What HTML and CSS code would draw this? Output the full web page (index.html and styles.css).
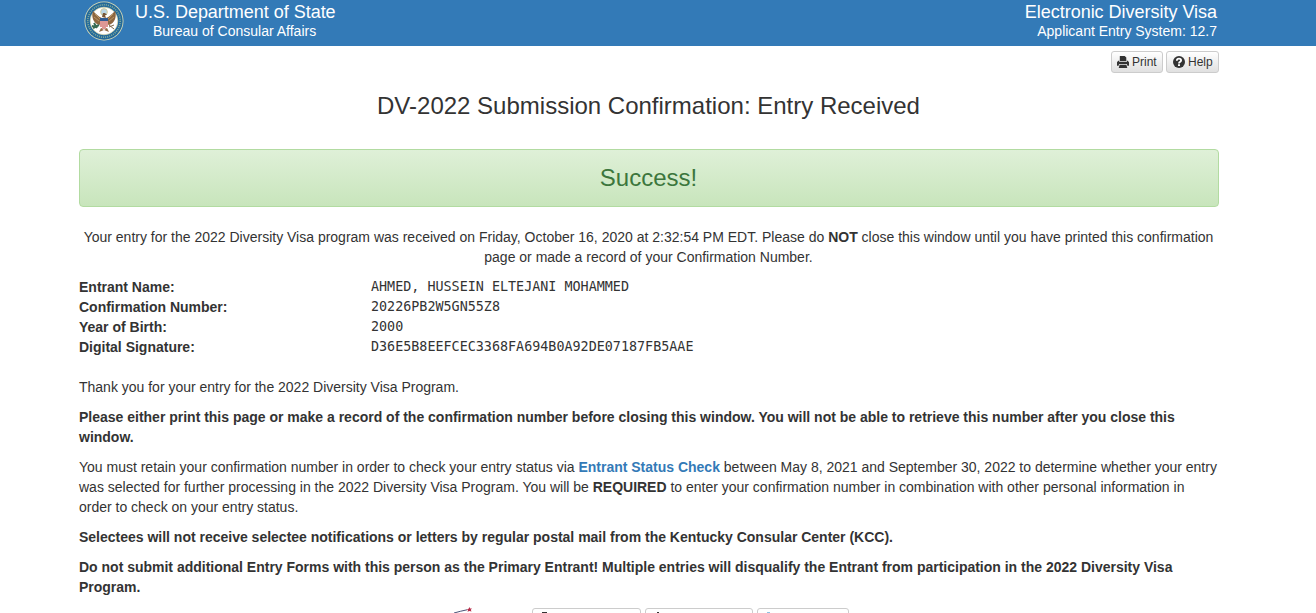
FILE: index.html
```html
<!DOCTYPE html>
<html lang="en">
<head>
<meta charset="utf-8">
<title>Electronic Diversity Visa</title>
<link rel="stylesheet" href="styles.css">
</head>
<body>
<header class="banner">
  <div class="container banner-row">
    <svg class="seal" viewBox="0 0 40 40">
      <circle cx="20" cy="20" r="19.5" fill="#dfe0b8"/>
      <circle cx="20" cy="20" r="18.7" fill="#23699a"/>
      <circle cx="20" cy="20" r="16.2" fill="none" stroke="#7fa99a" stroke-width="1.6" stroke-dasharray="1.1 1"/>
      <circle cx="20" cy="20" r="13.8" fill="#fff" stroke="#d9d5a2" stroke-width=".7"/>
      <circle cx="20" cy="11" r="3.4" fill="#b9d5e5" stroke="#d8c888" stroke-width=".8"/>
      <path d="M18 17C15 16 12 13 9 10C7 15 9 22 15 24L17 23ZM22 17C25 16 28 13 31 10C33 15 31 22 25 24L23 23Z" fill="#8e6740"/>
      <path d="M11 13L16 18M10 16L15 20M29 13L24 18M30 16L25 20" stroke="#c2a16b" stroke-width=".8"/>
      <path d="M18 16L19 12L21 12L23 14L21 14L22 17Z" fill="#785637"/>
      <path d="M17 27L15 31L20 29L25 31L23 27Z" fill="#916b46"/>
      <path d="M15 24L9 27M10 22L13 27M8 25L13 26" stroke="#386b54" stroke-width="2"/>
      <path d="M25 24L30 28M25 26L30 24" stroke="#806849" stroke-width="1"/>
      <path d="M16 17H24V23Q24 27 20 29Q16 27 16 23Z" fill="#fff"/>
      <path d="M17 20V26M19 20V28M21 20V28M23 20V26" stroke="#c1433e" stroke-width="1.1"/>
      <path d="M16 17H24V20H16Z" fill="#315b91"/>
    </svg>
    <div class="agency">
      <div class="big">U.S. Department of State</div>
      <div class="small bureau">Bureau of Consular Affairs</div>
    </div>
    <div class="system">
      <div class="big">Electronic Diversity Visa</div>
      <div class="small">Applicant Entry System: 12.7</div>
    </div>
  </div>
</header>
<main class="container">
  <div class="tools">
    <button class="btn print"><svg class="icon" viewBox="0 0 12 12"><path d="M2.8 0H7.7L9.3 1.6V5.2H2.8Z" fill="#333"/><path d="M0 6.2L1.2 4.8H2.3V6H9.8V4.8H10.8L12 6.2V9.8H10.4L9.9 8.1H2.1L1.6 9.8H0Z" fill="#333"/><path d="M2.6 8.8H9.4L10.3 12H1.7Z" fill="#333"/></svg><span>Print</span></button>
    <button class="btn help"><svg class="icon" viewBox="0 0 12 12"><circle cx="6" cy="6" r="6" fill="#333"/><path d="M3.8 4.7Q3.8 2.7 6 2.7Q8.1 2.7 8.1 4.4Q8.1 5.3 7 5.9Q6 6.4 6 7.4" fill="none" stroke="#fff" stroke-width="1.8"/><path d="M5 8.3H7V10H5Z" fill="#fff"/></svg><span>Help</span></button>
  </div>
  <h1 class="title">DV-2022 Submission Confirmation: Entry Received</h1>
  <div class="alert">Success!</div>
  <p class="intro">Your entry for the 2022 Diversity Visa program was received on Friday, October 16, 2020 at 2:32:54 PM EDT. Please do <b>NOT</b> close this window until you have printed this confirmation<br>page or made a record of your Confirmation Number.</p>
  <dl class="details">
    <dt>Entrant Name:</dt><dd>AHMED, HUSSEIN ELTEJANI MOHAMMED</dd>
    <dt>Confirmation Number:</dt><dd>20226PB2W5GN55Z8</dd>
    <dt>Year of Birth:</dt><dd>2000</dd>
    <dt>Digital Signature:</dt><dd>D36E5B8EEFCEC3368FA694B0A92DE07187FB5AAE</dd>
  </dl>
  <div class="notes">
    <p>Thank you for your entry for the 2022 Diversity Visa Program.</p>
    <p class="strong">Please either print this page or make a record of the confirmation number before closing this window. You will not be able to retrieve this number after you close this<br>window.</p>
    <p>You must retain your confirmation number in order to check your entry status via <a class="link">Entrant Status Check</a> between May 8, 2021 and September 30, 2022 to determine whether your entry<br>was selected for further processing in the 2022 Diversity Visa Program. You will be <b>REQUIRED</b> to enter your confirmation number in combination with other personal information in<br>order to check on your entry status.</p>
    <p class="strong">Selectees will not receive selectee notifications or letters by regular postal mail from the Kentucky Consular Center (KCC).</p>
    <p class="strong">Do not submit additional Entry Forms with this person as the Primary Entrant! Multiple entries will disqualify the Entrant from participation in the 2022 Diversity Visa<br>Program.</p>
  </div>
  <footer class="footer">
    <svg class="flag" viewBox="0 0 20 8"><path d="M1 6Q8 4 14 2.8" fill="none" stroke="#4b5478" stroke-width="1"/><path d="M16.4 0L17.1 1.5L19 1.4L17.8 2.8L18.5 4.6L16.4 3.9L14.5 4.8L15 3L13.6 1.9H15.4Z" fill="#b72c48"/></svg>
    <span class="tab tab1"><i class="dot"></i></span>
    <span class="tab tab2"><i class="dot slim"></i></span>
    <span class="tab tab3"><i class="dot blue"></i></span>
  </footer>
</main>
</body>
</html>
```
FILE: styles.css
```css
* { box-sizing: border-box; }
html { height: 100%; overflow: hidden; }
body { margin: 0; height: 613px; overflow: hidden; background: #fff; color: #333; font: 14px/20px "Liberation Sans", Arial, sans-serif; white-space: nowrap; }
.container { width: 1140px; margin-left: 79px; }
.banner { height: 46px; background: #337ab7; color: #fff; }
.banner-row { display: flex; height: 46px; }
.seal { width: 40px; height: 40px; margin: 1px 11px 0 5px; }
.big { font-size: 18px; line-height: 20px; padding-top: 2px; letter-spacing: -0.02px; }
.small { font-size: 14px; line-height: 16px; padding-top: 1px; }
.bureau { padding-left: 18px; }
.system { margin-left: auto; padding-right: 2px; text-align: right; }
.tools { display: flex; justify-content: flex-end; gap: 3px; padding-top: 5px; }
.btn { display: flex; align-items: center; gap: 3px; height: 22px; padding: 0 5px; border: 1px solid #ccc; border-radius: 3px; background: linear-gradient(#fff, #e0e0e0); color: #333; font: 12px/18px "Liberation Sans", Arial, sans-serif; }
.print { width: 52px; }
.help { width: 53px; padding-left: 6px; }
.icon { width: 12px; height: 12px; flex: none; margin-top: -1px; }
.title { margin: 20px 0 0; padding-right: 1px; font-size: 24px; line-height: 26px; font-weight: normal; text-align: center; }
.alert { height: 58px; margin: 30px 0 20px; padding: 15px 1px 0 0; border: 1px solid #b2dba1; border-radius: 4px; background: linear-gradient(#dff0d8, #c8e5bc); color: #3c763d; font-size: 24px; line-height: 26px; text-align: center; }
p { margin: 0 0 10px; }
.intro { text-align: center; padding-right: 1px; }
.details { display: grid; grid-template-columns: 292px 1fr; grid-auto-rows: 20px; margin: 0 0 20px; }
dt, b, .strong, .link { font-weight: bold; }
dt, .notes { letter-spacing: -0.005px; }
dd { margin: 0; font: 13.4px/20px "DejaVu Sans Mono", monospace; }
.link { color: #337ab7; }
.footer { display: flex; align-items: flex-start; padding-top: 1px; }
.flag { width: 20px; height: 8px; margin: -1px 59px 0 374px; }
.tab { display: flex; height: 22px; margin-right: 4px; border: 1px solid #ccc; border-radius: 3px; }
.tab1 { width: 109px; }
.tab2 { width: 108px; }
.tab3 { width: 92px; }
.dot { width: 5px; height: 2px; margin: 3px 0 0 9px; background: #333; }
.slim { width: 2px; margin-left: 11px; }
.blue { width: 3px; background: #8dc3e4; }
```
